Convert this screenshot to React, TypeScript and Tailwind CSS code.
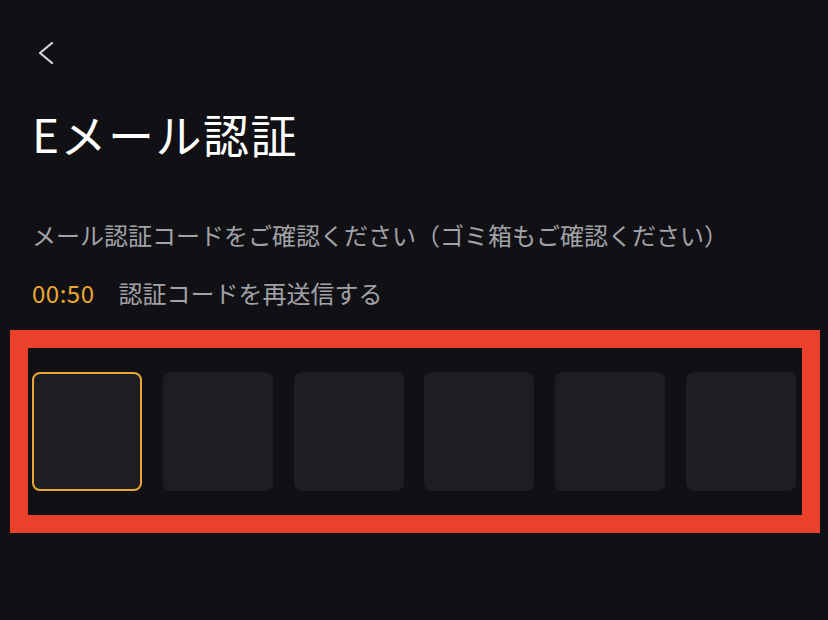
import React from 'react';

const CODE_LENGTH = 6;

const BackButton: React.FC = () => (
  <button className="ml-[39px] block h-[22px] w-[14px]" aria-label="戻る">
    <svg width="14" height="22" viewBox="0 0 14 22" fill="none">
      <polyline
        points="13,1 1,11 13,21"
        stroke="#d6d6d8"
        strokeWidth="2.2"
        strokeLinecap="round"
        strokeLinejoin="round"
      />
    </svg>
  </button>
);

const CodeBox: React.FC<{ active?: boolean }> = ({ active }) => (
  <div
    className={`h-[119px] w-[110px] rounded-[8px] bg-[#1e1e22] ${
      active ? 'border-2 border-[#eba732]' : ''
    }`}
  />
);

const App: React.FC = () => {
  return (
    <div
      className="min-h-[620px] w-full overflow-hidden bg-[#111115] pt-[42px] text-white"
      style={{ fontFamily: '"Noto Sans CJK JP", "Noto Sans", sans-serif' }}
    >
      <BackButton />

      <h1 className="ml-[32px] mt-[41px] text-[46px] leading-[56px] tracking-[1.5px] font-normal text-white">
        Eメール認証
      </h1>

      <p className="ml-[32px] mt-[58px] text-[24px] leading-[32px] text-[#a2a2a7]">
        メール認証コードをご確認ください（ゴミ箱もご確認ください）
      </p>

      <div className="ml-[32px] mt-[26px] flex items-center text-[24px] leading-[32px]">
        <span className="tracking-[0.5px] text-[#eba732]">00:50</span>
        <span className="ml-[24px] text-[#a2a2a7]">認証コードを再送信する</span>
      </div>

      <div className="mx-[10px] mt-[21px] w-[810px] border-[18px] border-[#e9412a] pl-[4px] pr-[6px] py-[24px]">
        <div className="flex justify-between">
          {Array.from({ length: CODE_LENGTH }).map((_, i) => (
            <CodeBox key={i} active={i === 0} />
          ))}
        </div>
      </div>
    </div>
  );
};

export default App;
